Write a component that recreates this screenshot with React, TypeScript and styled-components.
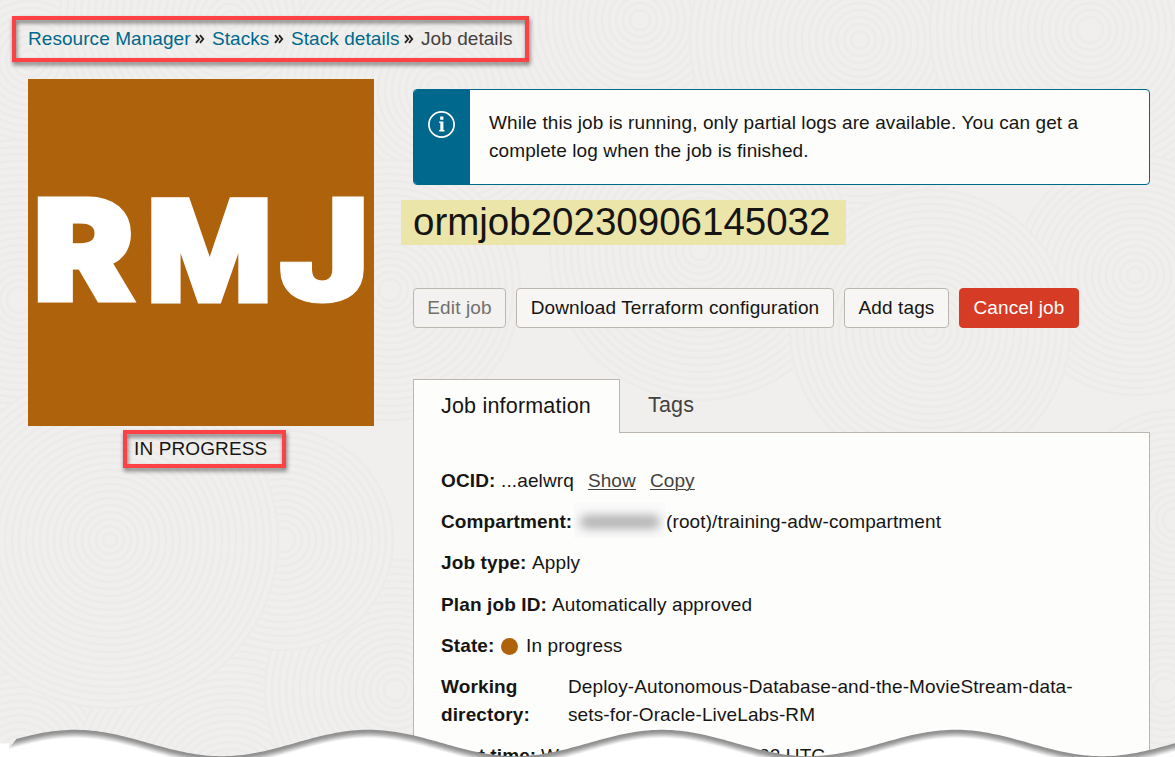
import React from "react";
import styled, { createGlobalStyle, css } from "styled-components";

const Global = createGlobalStyle`
  * { box-sizing: border-box; }
  html, body { margin: 0; padding: 0; background: #f0efed; }
  body { overflow: hidden; font-family: "Liberation Sans", Arial, sans-serif; font-size: 19px; line-height: 28px; letter-spacing: 0.12px; color: #161513; }
`;

const Page = styled.div`
  position: relative;
  width: 1175px;
  height: 757px;
  overflow: hidden;
  background: #f0efed;
`;

const Texture = styled.svg`
  position: absolute;
  inset: 0;
`;

const Wave = styled.svg`
  position: absolute;
  left: 0;
  bottom: 0;
`;

const Content = styled.div`
  position: relative;
  display: flex;
  flex-direction: column;
  padding: 16px 25px 0 28px;
`;

const Highlight = styled.span<{ $inset: string }>`
  position: absolute;
  inset: ${(p) => p.$inset};
  border: 4px solid #fd4245;
  filter: drop-shadow(1px 3px 2px rgba(0, 0, 0, 0.5));
  pointer-events: none;
`;

const Breadcrumbs = styled.nav`
  position: relative;
  display: flex;
  align-items: center;
  align-self: flex-start;
  height: 46px;
  width: 485px;
  white-space: nowrap;
`;

const Crumb = styled.a<{ $width: number; $current?: boolean }>`
  flex: none;
  width: ${(p) => p.$width}px;
  letter-spacing: 0.06px;
  color: ${(p) => (p.$current ? "#45413d" : "#00688c")};
`;

const Separator = styled.svg`
  flex: none;
  width: 21px;
  height: 10px;
`;

const Columns = styled.div`
  display: flex;
  gap: 39px;
  margin-top: 17px;
`;

const Side = styled.aside`
  flex: none;
  width: 346px;
`;

const Badge = styled.svg`
  display: block;
  width: 346px;
  height: 347px;
  background: #ad620b;
`;

const Status = styled.div`
  position: relative;
  width: 163px;
  height: 38px;
  margin: 4px 0 0 95px;
  padding: 5px 0 0 11px;
  white-space: nowrap;
`;

const Main = styled.main`
  flex: none;
  width: 737px;
  padding-top: 10px;
`;

const Alert = styled.section`
  display: flex;
  height: 96px;
  border: 1px solid #00688c;
  border-radius: 4px;
  overflow: hidden;
  background: #fdfdfb;
`;

const AlertIcon = styled.div`
  flex: none;
  width: 56px;
  padding: 21px 0 0 14px;
  background: #00688c;
  svg { display: block; }
`;

const AlertText = styled.p`
  margin: 0;
  padding: 19px 0 0 19px;
  letter-spacing: 0.1px;
  white-space: nowrap;
`;

const Title = styled.h1`
  width: 445px;
  height: 45px;
  margin: 15px 0 0 -12px;
  padding-left: 12px;
  background: #ebe5a9;
  font-size: 38.5px;
  font-weight: 400;
  letter-spacing: 0;
  line-height: 44px;
`;

const Toolbar = styled.div`
  display: flex;
  gap: 10px;
  margin-top: 43px;
`;

const Button = styled.button<{ $width: number; $kind?: "danger" | "disabled" }>`
  width: ${(p) => p.$width}px;
  height: 40px;
  padding: 0;
  border: 1px solid #bcb6b1;
  border-radius: 4px;
  background: #f7f6f5;
  font: inherit;
  letter-spacing: 0.12px;
  white-space: nowrap;
  color: #161513;
  ${(p) => p.$kind === "disabled" && css`background: #f3f2f1; color: #70706e;`}
  ${(p) => p.$kind === "danger" && css`background: #d63b25; border-color: #d63b25; color: #fff;`}
`;

const Tabs = styled.div`
  display: flex;
  height: 53px;
  margin-top: 51px;
  font-size: 21.5px;
`;

const Tab = styled.div<{ $active?: boolean }>`
  padding: 12px 28px 0 28px;
  letter-spacing: 0.2px;
  color: #45413d;
  ${(p) =>
    p.$active &&
    css`
      position: relative;
      width: 207px;
      height: 54px;
      padding-left: 27px;
      border: 1px solid #bcb6b1;
      border-bottom: 0;
      background: #fdfdfb;
      color: #161513;
      z-index: 1;
    `}
`;

const Panel = styled.section`
  display: flex;
  flex-direction: column;
  gap: 13.2px;
  height: 400px;
  padding: 34px 27px 0;
  border: 1px solid #bcb6b1;
  background: #fdfdfb;
`;

const Row = styled.div`
  display: flex;
  flex: none;
  white-space: nowrap;
`;

const Label = styled.strong<{ $width: number }>`
  flex: none;
  width: ${(p) => p.$width}px;
`;

const Value = styled.span``;

const Action = styled.a`
  margin-left: 14px;
  color: #45413d;
  text-decoration: underline;
  text-underline-offset: 2px;
  text-decoration-thickness: 1px;
`;

const Redacted = styled.span`
  width: 91px;
  height: 35px;
  margin: -5px 1px -2px 0;
  overflow: hidden;
  background: #fafafa;
  &::before {
    content: "";
    display: block;
    width: 80px;
    height: 14px;
    margin: 12px 0 0 6px;
    border-radius: 7px;
    background: #b4b4b4;
    filter: blur(5px);
  }
`;

const Dot = styled.span`
  width: 17px;
  height: 17px;
  margin: 6px 8px 0 0;
  border-radius: 50%;
  background: #ad620b;
`;

const swirls = [
  [30, 60, 150], [230, 20, 170], [440, 90, 160], [640, 20, 150], [860, 40, 170], [1090, 30, 160],
  [20, 300, 160], [390, 290, 130], [700, 250, 150], [1135, 275, 120], [930, 330, 140],
  [20, 760, 150], [230, 790, 160], [395, 690, 130], [1175, 520, 110], [1165, 690, 110],
  [283, 540, 110], [110, 540, 168],
];

const rings = (r: number) => Array.from({ length: Math.floor(r / 7) }, (_, i) => r - i * 7);

function wavePath(offset: number, start: number) {
  let d = `M${start} 60`;
  for (let x = start; x <= 1179; x += 4) {
    const y = 14 - 13.2 * Math.cos(((x - 75) / 293.5) * Math.PI * 2) + offset;
    d += ` L${x} ${y.toFixed(2)}`;
  }
  return d + " V60 Z";
}

const shades = ["#8f8f8f", "#939393", "#9c9c9c", "#aaa", "#bbb", "#cdcdcd", "#dfdfdf", "#efefef", "#fff"];

const Chevrons = () => (
  <Separator viewBox="0 0 21 10">
    <path d="M5 1.2 8.2 5 5 8.8M9 1.2 12.2 5 9 8.8" fill="none" stroke="#262422" strokeWidth="1.9" />
  </Separator>
);

export default function App() {
  return (
    <Page>
      <Global />
      <Texture width="1175" height="757">
        {swirls.map(([x, y, r], i) => (
          <g key={i}>
            {rings(r).map((q) => (
              <circle key={q} cx={x} cy={y} r={q} fill="#f0efed" stroke="#ecebe9" strokeWidth="2.4" />
            ))}
          </g>
        ))}
      </Texture>
      <Content>
        <Breadcrumbs>
          <Crumb $width={163}>Resource Manager</Crumb>
          <Chevrons />
          <Crumb $width={58}>Stacks</Crumb>
          <Chevrons />
          <Crumb $width={109}>Stack details</Crumb>
          <Chevrons />
          <Crumb $width={92} $current>Job details</Crumb>
          <Highlight $inset="0 -16px 0 -16px" />
        </Breadcrumbs>
        <Columns>
          <Side>
            <Badge viewBox="0 0 346 347">
              <text
                transform="scale(1.08 1)"
                fontFamily="Inter, sans-serif"
                fontWeight="900"
                letterSpacing="0"
                fill="#fff"
                stroke="#fff"
              >
                <tspan x="5.2" y="221.5" fontSize="139" strokeWidth="5">R</tspan>
                <tspan
                  x="109.3"
                  y="220"
                  fontFamily="Liberation Sans, Arial, sans-serif"
                  fontWeight="700"
                  fontSize="141"
                  strokeWidth="9"
                >
                  M
                </tspan>
                <tspan x="231.3" y="223.5" fontSize="144" strokeWidth="1">J</tspan>
              </text>
            </Badge>
            <Status>
              IN PROGRESS
              <Highlight $inset="0" />
            </Status>
          </Side>
          <Main>
            <Alert>
              <AlertIcon>
                <svg width="28" height="28" viewBox="0 0 28 28">
                  <circle cx="13.5" cy="13.5" r="12.6" fill="none" stroke="#fff" strokeWidth="1.7" />
                  <path d="M12.2 5.5h3.2v3.2h-3.2zM11.2 10.4h4.2v8.6h1.1v1.6h-5.3v-1.6h1.1v-7h-1.1z" fill="#fff" />
                </svg>
              </AlertIcon>
              <AlertText>
                While this job is running, only partial logs are available. You can get a
                <br />
                complete log when the job is finished.
              </AlertText>
            </Alert>
            <Title>ormjob20230906145032</Title>
            <Toolbar>
              <Button $width={93} $kind="disabled">Edit job</Button>
              <Button $width={318}>Download Terraform configuration</Button>
              <Button $width={105}>Add tags</Button>
              <Button $width={120} $kind="danger">Cancel job</Button>
            </Toolbar>
            <Tabs>
              <Tab $active>Job information</Tab>
              <Tab>Tags</Tab>
            </Tabs>
            <Panel>
              <Row>
                <Label $width={60}>OCID:</Label>
                <Value>...aelwrq</Value>
                <Action>Show</Action>
                <Action>Copy</Action>
              </Row>
              <Row>
                <Label $width={133}>Compartment:</Label>
                <Redacted />
                <Value>(root)/training-adw-compartment</Value>
              </Row>
              <Row>
                <Label $width={91}>Job type:</Label>
                <Value>Apply</Value>
              </Row>
              <Row>
                <Label $width={111}>Plan job ID:</Label>
                <Value>Automatically approved</Value>
              </Row>
              <Row>
                <Label $width={60}>State:</Label>
                <Dot />
                <Value>In progress</Value>
              </Row>
              <Row>
                <Label $width={127}>
                  Working
                  <br />
                  directory:
                </Label>
                <Value>
                  Deploy-Autonomous-Database-and-the-MovieStream-data-
                  <br />
                  sets-for-Oracle-LiveLabs-RM
                </Value>
              </Row>
              <Row>
                <Label $width={100}>Start time:</Label>
                <Value>Wed, Sep 6, 2023, 14:50:32 UTC</Value>
              </Row>
            </Panel>
          </Main>
        </Columns>
      </Content>
      <Wave width="1175" height="28" viewBox="0 0 1175 28">
        <path d="M0 14.5 H9 V60 H0 Z" fill="#fff" />
        {shades.map((c, i) => (
          <path key={c} d={wavePath(i, 16 - i)} fill={c} />
        ))}
      </Wave>
    </Page>
  );
}
